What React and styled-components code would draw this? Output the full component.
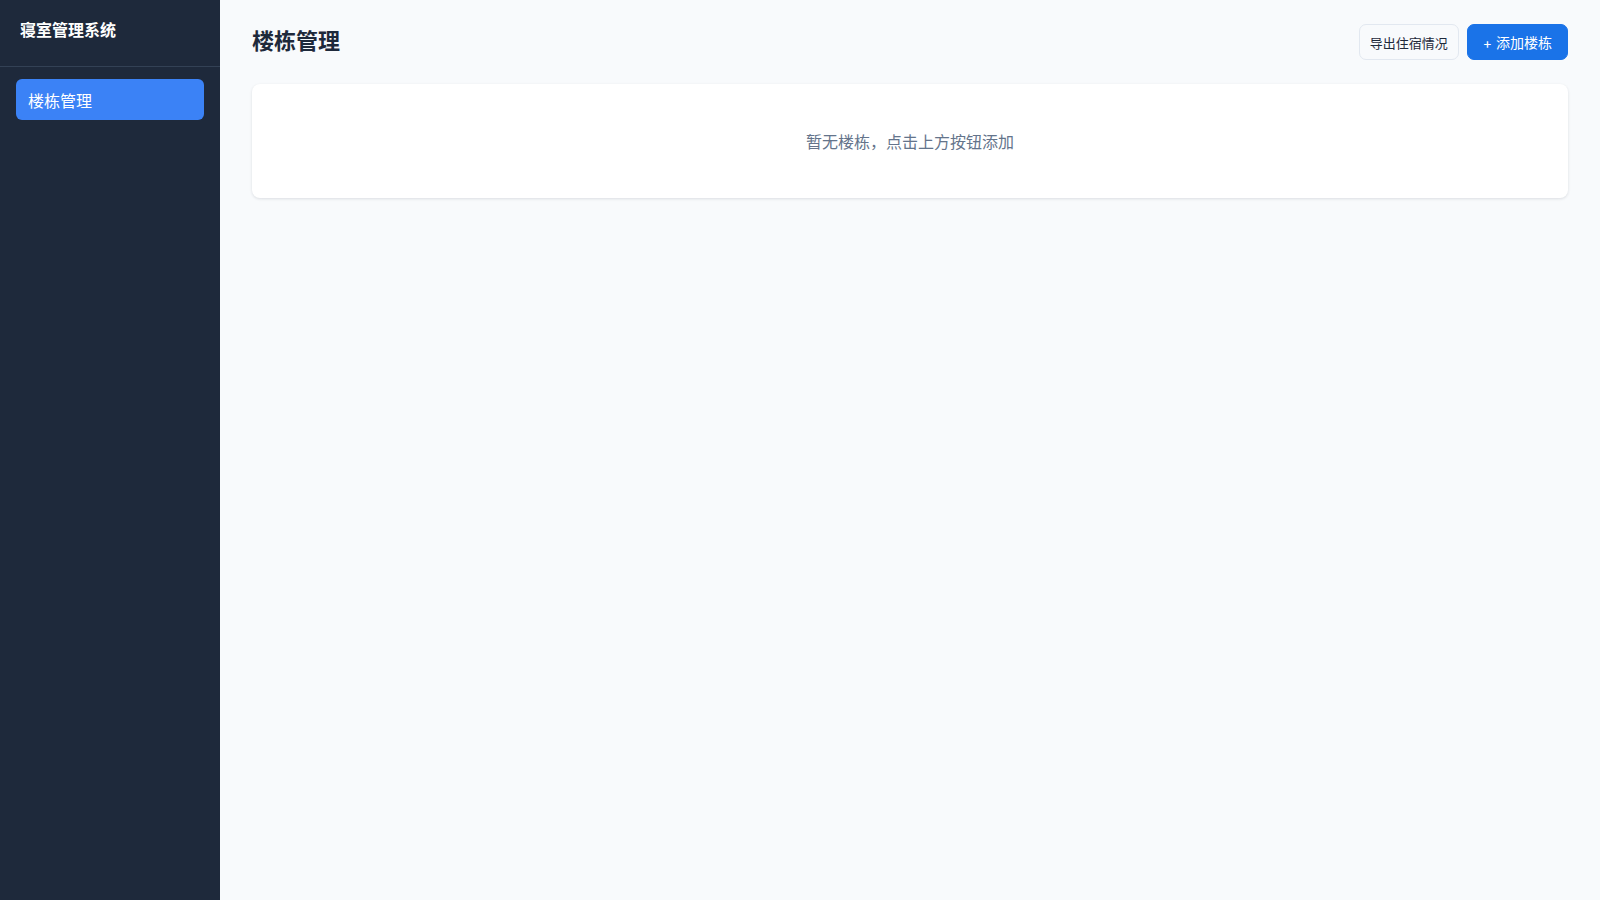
import React from 'react';
import styled, { createGlobalStyle } from 'styled-components';

const GlobalStyle = createGlobalStyle`
  html, body, #root {
    margin: 0;
    height: 100%;
  }
  body {
    font-family: Inter, 'Noto Sans CJK SC', sans-serif;
    background: #f8fafc;
  }
  * {
    box-sizing: border-box;
  }
`;

const Layout = styled.div`
  display: flex;
  height: 100vh;
`;

const Sidebar = styled.aside`
  width: 220px;
  flex-shrink: 0;
  background: #1e293b;
  color: #fff;
  display: flex;
  flex-direction: column;
`;

const Brand = styled.div`
  height: 67px;
  padding: 19px 20px 0;
  line-height: 22px;
  font-size: 16px;
  font-weight: 700;
  border-bottom: 1px solid #334155;
`;

const Nav = styled.nav`
  padding: 12px 16px;
  display: flex;
  flex-direction: column;
  gap: 4px;
`;

const NavItem = styled.div`
  height: 41px;
  padding: 0 12px;
  display: flex;
  align-items: center;
  border-radius: 6px;
  font-size: 16px;
  background: ${(p) => (p.$active ? '#3b82f6' : 'transparent')};
  color: ${(p) => (p.$active ? '#fff' : '#cbd5e1')};
`;

const Main = styled.main`
  flex: 1;
  padding: 24px 32px;
  background: #f8fafc;
`;

const Header = styled.div`
  display: flex;
  align-items: flex-start;
  justify-content: space-between;
  margin-bottom: 24px;
`;

const Title = styled.h1`
  margin: 0;
  font-size: 22px;
  line-height: 35px;
  font-weight: 700;
  color: #1e293b;
`;

const Actions = styled.div`
  display: flex;
  gap: 8px;
`;

const Button = styled.button`
  height: 36px;
  padding: 0 ${(p) => (p.$primary ? '15px' : '10px')};
  border-radius: 7px;
  font-family: inherit;
  font-size: ${(p) => (p.$primary ? '14px' : '13px')};
  cursor: pointer;
  border: 1px solid ${(p) => (p.$primary ? '#1a73e8' : '#e2e8f0')};
  background: ${(p) => (p.$primary ? '#1a73e8' : '#f8fafc')};
  color: ${(p) => (p.$primary ? '#fff' : '#1e293b')};
`;

const Card = styled.div`
  background: #fff;
  border-radius: 8px;
  box-shadow: 0 1px 3px rgba(15, 23, 42, 0.12);
  height: 114px;
  display: flex;
  align-items: center;
  justify-content: center;
`;

const Empty = styled.div`
  font-size: 16px;
  color: #64748b;
`;

export default function App() {
  return (
    <>
      <GlobalStyle />
      <Layout>
        <Sidebar>
          <Brand>寝室管理系统</Brand>
          <Nav>
            <NavItem $active>楼栋管理</NavItem>
          </Nav>
        </Sidebar>
        <Main>
          <Header>
            <Title>楼栋管理</Title>
            <Actions>
              <Button>导出住宿情况</Button>
              <Button $primary>+ 添加楼栋</Button>
            </Actions>
          </Header>
          <Card>
            <Empty>暂无楼栋，点击上方按钮添加</Empty>
          </Card>
        </Main>
      </Layout>
    </>
  );
}
